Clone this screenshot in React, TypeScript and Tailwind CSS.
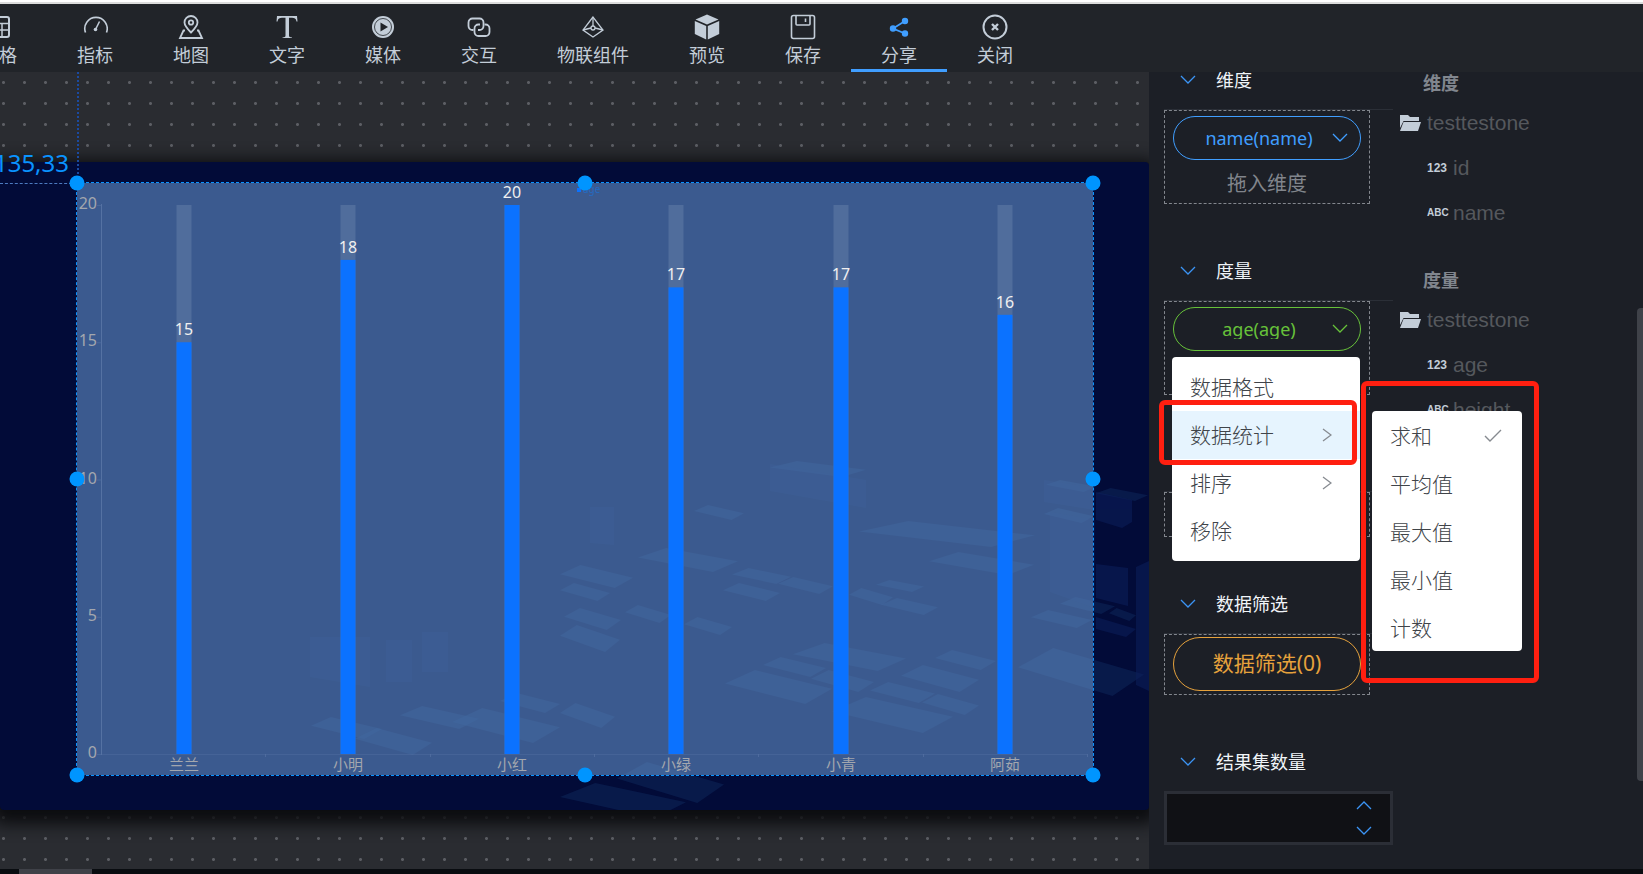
import clsx from "clsx";

const ink = "#c3cdd8";

const IconTable = () => (
  <svg width="26" height="26" viewBox="0 0 26 26" fill="none" stroke={ink} strokeWidth="2">
    <rect x="2" y="3" width="21" height="20" rx="2" />
    <path d="M2 9.500h21M2 16h21M16 9.500V23M9 9.500V23" strokeWidth="1.500" />
  </svg>
);

const IconGauge = () => (
  <svg width="26" height="26" viewBox="0 0 26 26" fill="none" stroke={ink} strokeWidth="1.600">
    <path d="M3.500 18.500A11.200 11.200 0 1 1 24.500 18.500" />
    <path d="M13.500 15.500L17.500 7.500" />
    <circle cx="13.500" cy="15.500" r="1.800" fill={ink} stroke="none" />
  </svg>
);

const IconMap = () => (
  <svg width="26" height="26" viewBox="0 0 26 26" fill="none" stroke={ink} strokeWidth="1.800">
    <path d="M13 18.500C9 14.500 6.500 12 6.500 8.500a6.500 6.500 0 0 1 13 0C19.500 12 17 14.500 13 18.500z" />
    <circle cx="13" cy="8.500" r="2.200" />
    <path d="M7 16.500H5.500L2 24h22l-3.500-7.500H19" />
  </svg>
);

const IconText = () => (
  <svg width="26" height="26" viewBox="0 0 26 26" fill={ink}>
    <path d="M3 2h20l.5 5.500h-1C22 4.500 20.500 3.800 18 3.800h-3v18c0 1.200 1 1.700 3 1.700V24H8.500v-.500c2 0 3-.500 3-1.700v-18H8C5.500 3.800 4 4.500 3.500 7.500h-1z" />
  </svg>
);

const IconMedia = () => (
  <svg width="26" height="26" viewBox="0 0 26 26">
    <circle cx="13" cy="13" r="11" fill={ink} />
    <circle cx="13" cy="13" r="8.500" fill="none" stroke="#212429" strokeWidth=".8" />
    <path d="M10.500 8.500l7.500 4.500-7.500 4.500z" fill="#212429" />
  </svg>
);

const IconLink = () => (
  <svg width="26" height="26" viewBox="0 0 26 26" fill="none" stroke={ink} strokeWidth="1.800">
    <path d="M7.500 16H6.500A4 4 0 0 1 2.500 12V8.500a4 4 0 0 1 4-4h7a4 4 0 0 1 4 4V12a4 4 0 0 1-4 4h-1.500" />
    <path d="M18.500 10.500h1a4 4 0 0 1 4 4V18a4 4 0 0 1-4 4h-7a4 4 0 0 1-4-4v-3.500a4 4 0 0 1 4-4H14" />
  </svg>
);

const IconIot = () => (
  <svg width="26" height="26" viewBox="0 0 26 26" fill="none" stroke={ink} strokeWidth="1.300">
    <path d="M13 3L3 16l10 7 10-7z" />
    <path d="M13 3v9M3 16l8-2M23 16l-8-2" />
    <circle cx="13" cy="14" r="2" />
  </svg>
);

const IconCube = () => (
  <svg width="26" height="26" viewBox="0 0 26 26" fill={ink}>
    <path d="M13 0.500l11.500 5L13 10.500 1.500 5.500z" />
    <path d="M.8 7l11.400 5v13.500L.8 20zM25.200 7l-11.400 5v13.500L25.200 20z" />
  </svg>
);

const IconSave = () => (
  <svg width="26" height="26" viewBox="0 0 26 26" fill="none" stroke={ink} strokeWidth="1.600">
    <rect x="1.500" y="1.500" width="23" height="23" rx="2" />
    <path d="M6 1.500v8.500a1 1 0 0 0 1 1h12a1 1 0 0 0 1-1V1.500M15.500 4.500v3.500" />
  </svg>
);

const IconShare = () => (
  <svg width="26" height="26" viewBox="0 0 26 26" fill="#409eff" stroke="#409eff" strokeWidth="1.400">
    <path d="M19 7L7 14.500l12 5" fill="none" strokeWidth="1.800" />
    <circle cx="19" cy="7" r="2.500" />
    <circle cx="7" cy="14.500" r="2.500" />
    <circle cx="19" cy="19.500" r="2.500" />
  </svg>
);

const IconClose = () => (
  <svg width="26" height="26" viewBox="0 0 26 26" fill="none" stroke={ink} strokeWidth="2">
    <circle cx="13" cy="13" r="11.500" />
    <path d="M10 10l6 6M16 10l-6 6" strokeWidth="2.400" />
  </svg>
);

const navItems = [
  { label: "表格", Icon: IconTable },
  { label: "指标", Icon: IconGauge },
  { label: "地图", Icon: IconMap },
  { label: "文字", Icon: IconText },
  { label: "媒体", Icon: IconMedia },
  { label: "交互", Icon: IconLink },
  { label: "物联组件", Icon: IconIot },
  { label: "预览", Icon: IconCube },
  { label: "保存", Icon: IconSave },
  { label: "分享", Icon: IconShare, active: true },
  { label: "关闭", Icon: IconClose },
];

const Toolbar = () => (
  <header className="h-[72px] shrink-0 overflow-hidden border-t-2 border-white bg-[#212429]">
    <nav className="-ml-[49px] flex h-full border-t-2 border-[#dcdcdc]">
      {navItems.map(({ label, Icon, active }) => (
        <button
          key={label}
          className={clsx(
            "flex shrink-0 flex-col items-center gap-[2px] border-b-3 px-[30px] pt-[10px] text-lg leading-[27px] text-[#c3cdd8]",
            active ? "border-[#409eff]" : "border-transparent"
          )}
        >
          <Icon />
          <span>{label}</span>
        </button>
      ))}
    </nav>
  </header>
);

const Chevron = ({ className, d = "M1 1l7 7 7-7" }: { className?: string; d?: string }) => (
  <svg className={className} width="16" height="10" viewBox="0 0 16 10" fill="none" stroke="currentColor" strokeWidth="1.300">
    <path d={d} />
  </svg>
);

const data = [
  { name: "兰兰", value: 15 },
  { name: "小明", value: 18 },
  { name: "小红", value: 20 },
  { name: "小绿", value: 17 },
  { name: "小青", value: 17 },
  { name: "阿茹", value: 16 },
];

const yOf = (v: number) => 571 - v * 27.45;

const Chart = () => (
  <svg className="block" width="1016" height="592" viewBox="0 0 1016 592">
    <g stroke="#5572a3" strokeWidth="1">
      <path d="M24.500 21v551" />
      <path d="M24 571.500h986" opacity=".4" />
      {[0, 5, 10, 15, 20].map((v) => (
        <path key={v} d={`M20 ${yOf(v) + 0.5}h5`} opacity=".6" />
      ))}
      {[1, 2, 3, 4, 5, 6].map((i) => (
        <path key={i} d={`M${Math.round(24 + i * 164.3) + 0.5} 571v3`} opacity=".7" />
      ))}
    </g>
    <g fill="#a3a7ae" fontSize="16" textAnchor="end">
      {[0, 5, 10, 15, 20].map((v) => (
        <text key={v} x="20" y={yOf(v) + 4}>
          {v}
        </text>
      ))}
    </g>
    {data.map(({ name, value }, i) => {
      const x = Math.round(106.500 + i * 164.3);
      return (
        <g key={name} textAnchor="middle">
          <rect x={x - 7.5} y="22" width="15" height="549" fill="#506d9c" />
          <rect x={x - 7.5} y={yOf(value)} width="15" height={value * 27.45} fill="#0b72ff" />
          <text x={x} y={yOf(value) - 7} fill="#f0f0f0" fontSize="16">
            {value}
          </text>
          <text x={x} y="587" fill="#a3a7ae" fontSize="15">
            {name}
          </text>
        </g>
      );
    })}
    <rect x="500" y="5" width="4" height="4" fill="#0b72ff" />
    <text x="506" y="10" fill="#1c72d8" fontSize="10" opacity=".7">
      age
    </text>
  </svg>
);

// flat roofs of the isometric city behind the chart: x, y, width, height
const roofs = [
  [560, 403, 73, 23], [560, 421, 50, 18], [638, 386, 100, 24], [732, 406, 59, 16], [778, 415, 55, 17],
  [849, 426, 44, 17], [881, 436, 57, 17], [684, 455, 48, 18], [625, 443, 46, 18], [564, 446, 57, 22],
  [560, 463, 60, 27], [763, 495, 63, 20], [811, 508, 63, 22], [725, 508, 107, 34], [832, 535, 121, 36],
  [901, 503, 78, 27], [870, 520, 65, 21], [922, 532, 57, 21], [935, 488, 61, 20], [1018, 486, 126, 48],
  [1031, 448, 61, 18], [1060, 435, 55, 17], [1109, 446, 27, 13], [859, 359, 176, 26], [929, 390, 105, 23],
  [560, 541, 55, 25], [1046, 318, 50, 12], [1096, 326, 52, 13], [770, 299, 96, 16], [793, 481, 113, 28],
  [723, 421, 57, 18], [876, 418, 48, 12], [694, 343, 50, 15], [1044, 346, 50, 15], [560, 621, 126, 35],
  [617, 600, 107, 41], [311, 555, 71, 22], [355, 566, 77, 27], [400, 544, 79, 23], [452, 546, 108, 35],
  [500, 531, 60, 20],
];

const City = () => (
  <svg className="absolute inset-0" width="1149" height="648" viewBox="0 0 1149 648">
    {roofs.map(([x, y, w, h]) => (
      <path
        key={`${x}-${y}`}
        d={`M${x} ${y + h * 0.4}L${x + w * 0.28} ${y}L${x + w} ${y + h * 0.55}L${x + w * 0.75} ${y + h}z`}
        fill="#0f2c62"
        opacity=".45"
      />
    ))}
    <g fill="#0b1f58" opacity=".3">
      <path d="M770 302l96 16v28l-96-17zM1050 350l45 8v88l-45-16zM1044 318l51 8v22l-51-8z" />
      <path d="M590 345h24v38l-24-2zM310 475h60v50l-60-10zM386 478h26v42h-26zM422 470h26v40h-26z" />
    </g>
    <g fill="#0c1f5c" opacity=".55">
      <path d="M1096 330l36 8v22l-10 6-26-8zM1096 402l32 4v38l-32-8zM1136 405l13-6v130l-13-6z" />
      <path d="M1096 455l40 12-10 8-30-8z" />
    </g>
  </svg>
);

const handles = [
  "left-0 top-0", "left-1/2 top-0", "left-full top-0",
  "left-0 top-1/2", "left-full top-1/2",
  "left-0 top-full", "left-1/2 top-full", "left-full top-full",
];

const Workspace = () => (
  <main className="relative min-w-0 flex-1 overflow-hidden bg-[#2a2c31] bg-[radial-gradient(circle,#5c5e64_1px,transparent_2px)] bg-[length:21px_21px] bg-position-[-7px_0px]">
    <div className="mt-[90px] h-[648px] w-full overflow-hidden rounded-sm bg-[#020b38] shadow-[0_6px_16px_8px_#0c0d10]">
      <div className="relative">
        <City />
      </div>
    </div>
    <div className="absolute top-0 left-[77px] h-[110px] border-l-2 border-dotted border-[#1b4aa0]" />
    <div className="absolute top-[111px] left-0 w-[77px] border-t border-dashed border-[#4c7ac0]" />
    <span className="absolute top-[73px] right-full -mr-[69px] text-2xl leading-9 text-[#0a93ff]">135,33</span>
    <div className="absolute top-[111px] left-[77px] bg-[#6798d2]/57 outline outline-dashed outline-[#0a93ff]">
      <Chart />
      {handles.map((pos) => (
        <i key={pos} className={clsx("absolute size-[15px] -translate-1/2 rounded-full bg-[#0095ff]", pos)} />
      ))}
    </div>
  </main>
);

const SectionTitle = ({ children }: { children: string }) => (
  <h2 className="flex h-[58px] items-center gap-5 pl-4 text-lg text-[#f0f4f8]">
    <Chevron className="text-[#3b94f5]" />
    {children}
  </h2>
);

const DropZone = ({ className, children }: { className?: string; children?: React.ReactNode }) => (
  <div className="w-[229px] border-t border-[#2b2f37]">
    <div className={clsx("w-[206px] border border-dashed border-[#83878e] px-2", className)}>{children}</div>
  </div>
);

const Pill = ({ label, className }: { label: string; className: string }) => (
  <button className={clsx("flex h-11 w-full items-center rounded-full border px-3 text-lg", className)}>
    <span className="flex-1 overflow-hidden text-center leading-5">{label}</span>
    <Chevron />
  </button>
);

const IconFolder = () => (
  <svg width="22" height="18" viewBox="0 0 22 18" fill="#c3cdd8">
    <path d="M1 1h8l2 2h9v4H4.500L1 14z" />
    <path d="M4.500 8H22l-3 9H1z" />
  </svg>
);

const fieldGroups = [
  { title: "维度", fields: [["123", "id"], ["ABC", "name"]] },
  { title: "度量", fields: [["123", "age"], ["ABC", "height"]] },
];

const FieldTree = () => (
  <div>
    {fieldGroups.map(({ title, fields }) => (
      <section key={title} className="h-[197px] text-[21px] text-[#55585d]">
        <h3 className="pl-6 text-lg leading-[22px] font-bold text-[#81868e]">{title}</h3>
        <ul className="mt-[6px] font-['Liberation_Sans',sans-serif] leading-[45px]">
          <li className="flex items-center gap-[6px]">
            <IconFolder />
            testtestone
          </li>
          {fields.map(([type, name]) => (
            <li key={name} className="flex items-center gap-[6px] pl-7">
              <b className={clsx("w-5 text-center font-bold text-[#c3cdd8]", type === "ABC" ? "text-[10px]" : "text-xs")}>{type}</b>
              {name}
            </li>
          ))}
        </ul>
      </section>
    ))}
  </div>
);

const MenuArrow = () => (
  <svg width="10" height="14" viewBox="0 0 10 14" fill="none" stroke="#868a90" strokeWidth="1.300">
    <path d="M1 1l8 6-8 6" />
  </svg>
);

const menu = [
  { label: "数据格式" },
  { label: "数据统计", sub: true, active: true },
  { label: "排序", sub: true },
  { label: "移除" },
];

const stats = ["求和", "平均值", "最大值", "最小值", "计数"];

const Menus = () => (
  <div className="absolute top-[285px] left-[23px] font-light text-[#404449]">
    <div className="w-[188px] rounded bg-white pt-[6px] pb-[6px] text-[21px] leading-[48px]">
      {menu.map(({ label, sub, active }) => (
        <button key={label} className={clsx("flex w-full items-center justify-between pr-7 pl-[18px]", active && "bg-[#e6f4fe]")}>
          {label}
          {sub && <MenuArrow />}
        </button>
      ))}
    </div>
    <div className="absolute top-[54px] left-[200px] h-60 w-[150px] rounded bg-white pt-px text-[21px] leading-[48px]">
      {stats.map((label, i) => (
        <button key={label} className="flex w-full items-center justify-between pr-5 pl-[18px]">
          {label}
          {i === 0 && (
            <svg width="18" height="14" viewBox="0 0 18 14" fill="none" stroke="#868a90" strokeWidth="1.400">
              <path d="M1 7l5 5L17 1" />
            </svg>
          )}
        </button>
      ))}
    </div>
    <div className="absolute top-[43px] -left-[13px] h-[65px] w-[198px] rounded-md border-5 border-[#ff1f10]" />
    <div className="absolute top-6 left-[189px] h-[302px] w-[178px] rounded-md border-5 border-[#ff1f10]" />
  </div>
);

const SidePanel = () => (
  <aside className="relative flex w-[494px] shrink-0 gap-[6px] overflow-hidden bg-[#1c1f26] pl-[15px]">
    <div className="-mt-[21px] w-[229px] shrink-0">
      <SectionTitle>维度</SectionTitle>
      <DropZone className="h-[94px] pt-[5px] text-center text-xl leading-[48px] text-[#81858c]">
        <Pill label="name(name)" className="border-[#409eff] text-[#409eff]" />
        拖入维度
      </DropZone>
      <div className="h-[38px]" />
      <SectionTitle>度量</SectionTitle>
      <DropZone className="h-[94px] pt-[5px]">
        <Pill label="age(age)" className="border-[#67c23a] text-[#67c23a]" />
      </DropZone>
      <div className="h-24" />
      <DropZone className="h-[45px]" />
      <div className="h-[38px]" />
      <SectionTitle>数据筛选</SectionTitle>
      <DropZone className="h-[61px] pt-[2px]">
        <button className="h-[54px] w-full rounded-full border border-[#e6a23c] text-[21px] text-[#e6a23c]">数据筛选(0)</button>
      </DropZone>
      <div className="h-[38px]" />
      <SectionTitle>结果集数量</SectionTitle>
      <div className="relative h-[54px] border-3 border-[#2b2e36] bg-[#101115] text-[#3b94f5]">
        <input aria-label="结果集数量" className="h-full w-full bg-transparent px-3 text-lg outline-none" />
        <div className="absolute inset-y-0 right-[18px] flex flex-col justify-between py-[6px]">
          <button aria-label="+">
            <Chevron d="M1 9l7-7 7 7" />
          </button>
          <button aria-label="-">
            <Chevron />
          </button>
        </div>
      </div>
    </div>
    <FieldTree />
    <Menus />
    <div className="absolute top-[236px] right-0 h-[473px] w-[6px] rounded-l-sm bg-[#3f4249]" />
  </aside>
);

const App = () => (
  <div className="flex h-screen flex-col overflow-hidden bg-[#090c10] font-['Noto_Sans','Noto_Sans_CJK_SC',sans-serif]">
    <Toolbar />
    <div className="flex min-h-0 flex-1">
      <Workspace />
      <SidePanel />
    </div>
    <footer className="h-[5px] shrink-0 pl-[19px]">
      <div className="h-full w-[73px] bg-[#3f4148]" />
    </footer>
  </div>
);

export default App;
